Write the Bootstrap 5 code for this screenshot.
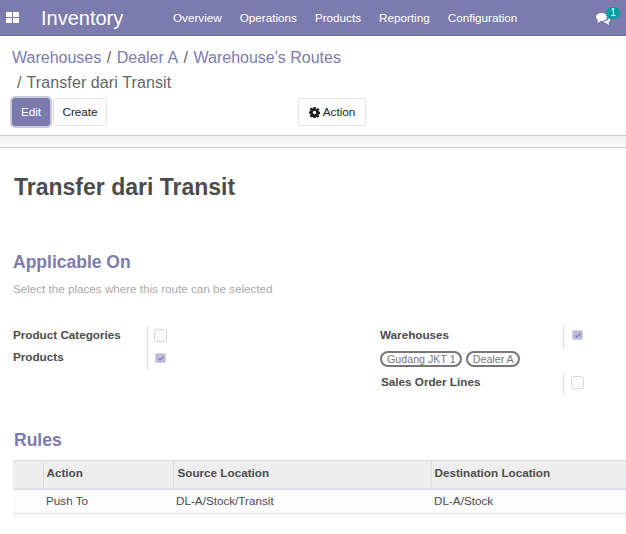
<!DOCTYPE html>
<html lang="en"><head><meta charset="utf-8">
<title>Inventory</title>
<link href="https://cdn.jsdelivr.net/npm/bootstrap@5.3.0/dist/css/bootstrap.min.css" rel="stylesheet">
<style>
html,body{height:534px;overflow:hidden}
body{font-family:"Liberation Sans",Arial,sans-serif;font-size:11.7px;color:#4c4c4c;background:#fff}
.topbar{height:36px;background:#7c7bad;border-bottom:1px solid #6a699b;color:#fff}
.appicon{margin-left:6px;width:13px;height:11px}
.appname{font-size:20px;margin-left:22px;width:132px;line-height:28px}
.menuitem{color:#fff;font-size:11.7px;margin-right:18px;text-decoration:none}
.chat{margin-right:6px;position:relative;width:24px;height:20px}
.chatbadge{position:absolute;left:10px;top:-1px;width:14px;height:12px;border-radius:7px;background:#00a09d;color:#fff;font-size:10px;line-height:12px;text-align:center}
.cpanel{height:100px;border-bottom:1px solid #ccc;padding:9px 12px 0 12px}
.crumbs{font-size:16px;line-height:25px;color:#666;height:50px;margin-bottom:3px}
.crumbs a{color:#7c7bad;text-decoration:none}
.crumbs .sep{margin:0 5.5px;color:#666}
.crumbline2{padding-left:5px;letter-spacing:.1px}
.crumbline2 .sep{margin:0 5px 0 0}
.btn-edit{background:#7c7bad;border:1px solid #7c7bad;color:#fff;font-size:11.7px;height:28px;width:38px;padding:0;border-radius:3px;box-shadow:0 0 0 2px #c9c9de}
.btn-plain{background:#fff;border:1px solid #dee2e6;color:#212529;font-size:11.7px;height:28px;padding:0;border-radius:3px}
.btn-create{margin-left:3px;width:54px}
.btn-action{margin-left:191px;width:68px;display:flex;align-items:center;justify-content:center;gap:3px}
.bandtop{height:12px;background:linear-gradient(#f0f0f0,#fafafa);border-bottom:1px solid #ccc}
.sheet{padding:0 13px}
.recname{font-size:23px;font-weight:700;color:#4c4c4c;line-height:28px;margin:25px 0 0 1px}
.subhead{font-size:17.5px;font-weight:700;color:#7c7bad;line-height:24px;margin:0}
.hint{color:#aaa;font-size:11.65px;line-height:16px;margin-top:7px}
.fieldname{font-weight:700;color:#4c4c4c}
.leftgroup{flex:none;width:367px;margin-top:29px}
.frow{height:22px;display:flex;align-items:flex-start}
.flabel{width:135px;height:100%;line-height:17px;border-right:1px solid #ddd}
.cb{display:block;width:13px;height:13px;border:1px solid #d8d8d8;border-radius:3px;background:#fafafa;margin:3px 0 0 6px}
.cbon{width:11px;height:10px;background:#bdbcd8;border:1px solid #d0d0e2;border-radius:2px;margin:5px 0 0 7px;display:flex;align-items:center;justify-content:center}
.rightgroup{flex:none;width:233px;margin-top:29px}
.rightgroup .cb{margin-left:7px}
.rightgroup .cbon{margin:4px 0 0 8px}
.rlabel{width:184px;height:100%;line-height:17px;border-right:1px solid #ddd}
.rlabel.shift{padding-left:1px}
.tags{height:25px;display:flex;align-items:flex-start;gap:4px;padding-top:3px}
.tagpill{border:2px solid #777;border-radius:10px;color:#777;font-size:10.7px;line-height:12px;padding:0 4px 0 5px}
.rulesh{font-size:17.5px;font-weight:700;color:#7c7bad;line-height:24px;margin:0 0 8px 1px}
.ruletab{width:613px;border-collapse:collapse;table-layout:fixed}
.ruletab th{background:#eee;border-top:1px solid #ddd;border-bottom:2px solid #dee2e6;height:28px;padding:0 3px 2px;font-weight:700;color:#4c4c4c;border-left:1px solid #ddd}
.ruletab th:first-child{border-left:0}
.ruletab th.srchead{padding-left:4px}
.ruletab td{background:#fcfcfc;height:25px;border-bottom:1px solid #dee2e6;padding:0 3px;color:#4c4c4c}
</style></head>
<body>
<nav class="topbar d-flex align-items-center">
<svg class="appicon" viewBox="0 0 13 11"><path fill="#fff" d="M0 0h6v5H0zM7 0h6v5H7zM0 6h6v5H0zM7 6h6v5H7z"/></svg>
<span class="appname">Inventory</span>
<a class="menuitem" href="#">Overview</a><a class="menuitem" href="#">Operations</a><a class="menuitem" href="#">Products</a><a class="menuitem" href="#">Reporting</a><a class="menuitem" href="#">Configuration</a>
<div class="chat ms-auto"><svg width="14" height="12" viewBox="0 0 14 12" style="position:absolute;left:0;top:5px"><ellipse cx="5.500" cy="4" rx="5.500" ry="4" fill="#fff"/><path fill="#fff" d="M2 6.500L1.500 10 5.500 7.500zM7 8.500c3 0 5.500-1.500 6-3.500 .8.700 1 1.500 1 2 0 1.200-.7 2-1.500 2.500l.5 2.500-3-2z"/></svg><span class="chatbadge">1</span></div>
</nav>
<header class="cpanel">
<div class="crumbs"><div><a href="#">Warehouses</a><span class="sep">/</span><a href="#">Dealer A</a><span class="sep">/</span><a href="#">Warehouse's Routes</a></div><div class="crumbline2"><span class="sep">/</span>Transfer dari Transit</div></div>
<div class="d-flex">
<button class="btn-edit" type="button">Edit</button><button class="btn-plain btn-create" type="button">Create</button>
<button class="btn-plain btn-action" type="button"><svg width="11" height="11" viewBox="0 0 16 16"><path fill="#222" fill-rule="evenodd" d="M6.500 0h3l.4 2.200 1.300.6L13 1.500l2.100 2.100-1.300 1.800.6 1.300 2.200.4v3l-2.200.4-.6 1.300 1.300 1.800-2.100 2.100-1.800-1.300-1.300.6-.4 2.200h-3l-.4-2.200-1.300-.6L3 15.100 .9 13l1.300-1.800-.6-1.300L-.6 9.500v-3l2.200-.4.6-1.300L.9 3 3 .9l1.800 1.300 1.300-.6zM8 5.500a2.500 2.500 0 1 0 0 5 2.500 2.500 0 0 0 0-5z"/></svg>Action</button>
</div>
</header>
<div class="bandtop"></div>
<main class="sheet">
<h1 class="recname">Transfer dari Transit</h1>
<h2 class="subhead" style="margin-top:49px">Applicable On</h2>
<div class="hint">Select the places where this route can be selected</div>
<div class="d-flex">
<div class="leftgroup">
<div class="frow"><div class="flabel fieldname">Product Categories</div><span class="cb"></span></div>
<div class="frow"><div class="flabel fieldname">Products</div><span class="cbon"><svg width="6" height="5" viewBox="0 0 6 5"><path d="M.5 2.500l1.500 1.500 3.500-3.500" fill="none" stroke="#7c7bad" stroke-width="1.200"/></svg></span></div>
</div>
<div class="rightgroup">
<div class="frow"><div class="rlabel fieldname">Warehouses</div><span class="cbon"><svg width="6" height="5" viewBox="0 0 6 5"><path d="M.5 2.500l1.500 1.500 3.500-3.500" fill="none" stroke="#7c7bad" stroke-width="1.200"/></svg></span></div>
<div class="tags"><span class="tagpill">Gudang JKT 1</span><span class="tagpill">Dealer A</span></div>
<div class="frow"><div class="rlabel shift fieldname">Sales Order Lines</div><span class="cb"></span></div>
</div>
</div>
<h2 class="rulesh" style="margin-top:33px">Rules</h2>
<table class="ruletab">
<colgroup><col style="width:30px"><col style="width:130px"><col style="width:258px"><col></colgroup>
<thead><tr><th></th><th>Action</th><th class="srchead">Source Location</th><th>Destination Location</th></tr></thead>
<tbody><tr><td></td><td>Push To</td><td>DL-A/Stock/Transit</td><td>DL-A/Stock</td></tr></tbody>
</table>
</main>
<script src="https://cdn.jsdelivr.net/npm/bootstrap@5.3.0/dist/js/bootstrap.bundle.min.js"></script>
</body></html>
